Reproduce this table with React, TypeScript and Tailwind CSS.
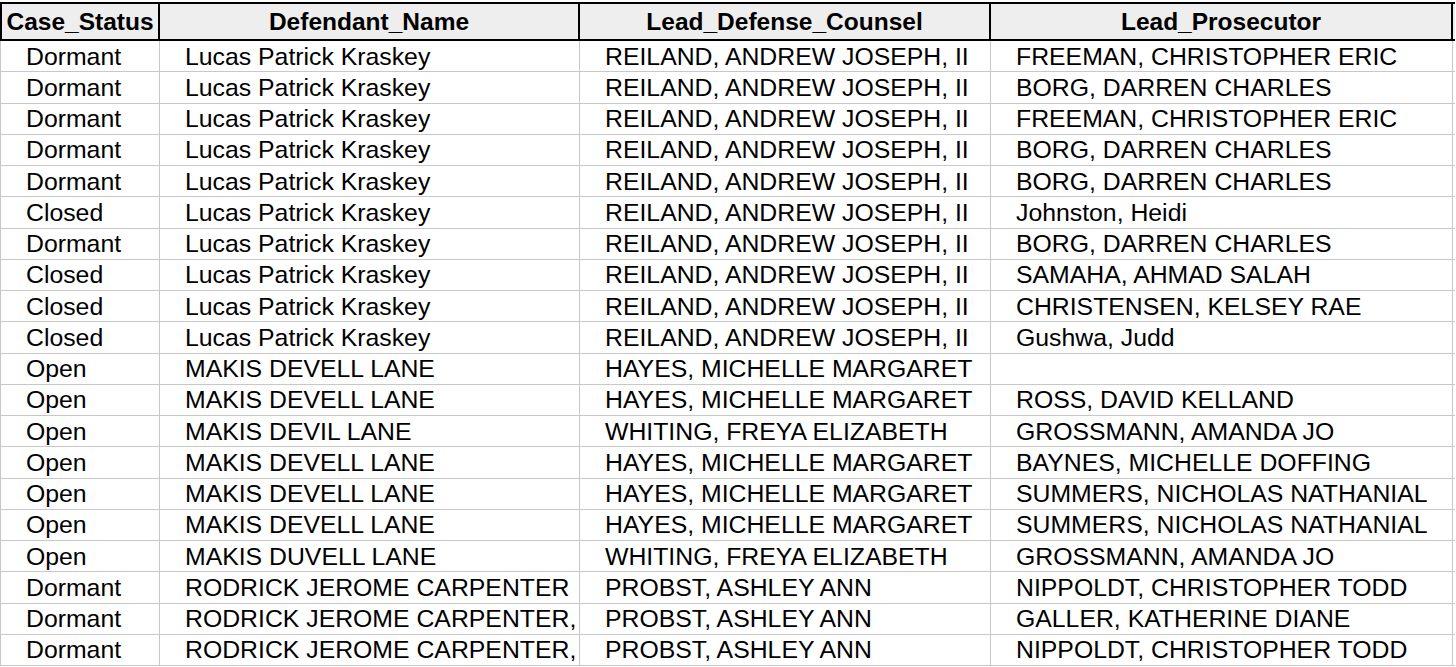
const columns = [
  { key: 'status', title: 'Case_Status', width: 'w-[160px]' },
  { key: 'defendant', title: 'Defendant_Name', width: 'w-[420px]' },
  { key: 'defense', title: 'Lead_Defense_Counsel', width: 'w-[411px]' },
  { key: 'prosecutor', title: 'Lead_Prosecutor', width: 'w-[462px]' },
];

const REILAND = 'REILAND, ANDREW JOSEPH, II';
const KRASKEY = 'Lucas Patrick Kraskey';
const HAYES = 'HAYES, MICHELLE MARGARET';
const WHITING = 'WHITING, FREYA ELIZABETH';
const PROBST = 'PROBST, ASHLEY ANN';

const rows: string[][] = [
  ['Dormant', KRASKEY, REILAND, 'FREEMAN, CHRISTOPHER ERIC'],
  ['Dormant', KRASKEY, REILAND, 'BORG, DARREN CHARLES'],
  ['Dormant', KRASKEY, REILAND, 'FREEMAN, CHRISTOPHER ERIC'],
  ['Dormant', KRASKEY, REILAND, 'BORG, DARREN CHARLES'],
  ['Dormant', KRASKEY, REILAND, 'BORG, DARREN CHARLES'],
  ['Closed', KRASKEY, REILAND, 'Johnston, Heidi'],
  ['Dormant', KRASKEY, REILAND, 'BORG, DARREN CHARLES'],
  ['Closed', KRASKEY, REILAND, 'SAMAHA, AHMAD SALAH'],
  ['Closed', KRASKEY, REILAND, 'CHRISTENSEN, KELSEY RAE'],
  ['Closed', KRASKEY, REILAND, 'Gushwa, Judd'],
  ['Open', 'MAKIS DEVELL LANE', HAYES, ''],
  ['Open', 'MAKIS DEVELL LANE', HAYES, 'ROSS, DAVID KELLAND'],
  ['Open', 'MAKIS DEVIL LANE', WHITING, 'GROSSMANN, AMANDA JO'],
  ['Open', 'MAKIS DEVELL LANE', HAYES, 'BAYNES, MICHELLE DOFFING'],
  ['Open', 'MAKIS DEVELL LANE', HAYES, 'SUMMERS, NICHOLAS NATHANIAL'],
  ['Open', 'MAKIS DEVELL LANE', HAYES, 'SUMMERS, NICHOLAS NATHANIAL'],
  ['Open', 'MAKIS DUVELL LANE', WHITING, 'GROSSMANN, AMANDA JO'],
  ['Dormant', 'RODRICK JEROME CARPENTER', PROBST, 'NIPPOLDT, CHRISTOPHER TODD'],
  ['Dormant', 'RODRICK JEROME CARPENTER,', PROBST, 'GALLER, KATHERINE DIANE'],
  ['Dormant', 'RODRICK JEROME CARPENTER,', PROBST, 'NIPPOLDT, CHRISTOPHER TODD'],
];

export default function App() {
  return (
    <div className="h-[667px] w-[1456px] overflow-hidden bg-white pt-[2px] font-['Liberation_Sans',Arial,sans-serif] text-black">
      {/* header row */}
      <div className="flex h-[39px] w-[1455px] border-y-2 border-l-2 border-black bg-[#eeeeee]">
        {columns.map((col) => (
          <div
            key={col.key}
            className={`${col.width} flex shrink-0 items-center justify-center border-r-2 border-black pt-[1px] text-[24.5px] font-bold leading-none first:w-[158px]`}
          >
            {col.title}
          </div>
        ))}
      </div>

      {/* data rows */}
      {rows.map((row, i) => (
        <div
          key={i}
          className="flex h-[31.25px] w-[1455px] border-b border-l border-[#c8c8c8]"
        >
          {row.map((cell, j) => (
            <div
              key={j}
              className={`${columns[j].width} flex shrink-0 items-center border-r border-[#c8c8c8] pl-[25px] pt-[2px] text-[24.8px] leading-none whitespace-nowrap first:w-[159px]`}
            >
              {cell}
            </div>
          ))}
        </div>
      ))}
    </div>
  );
}
